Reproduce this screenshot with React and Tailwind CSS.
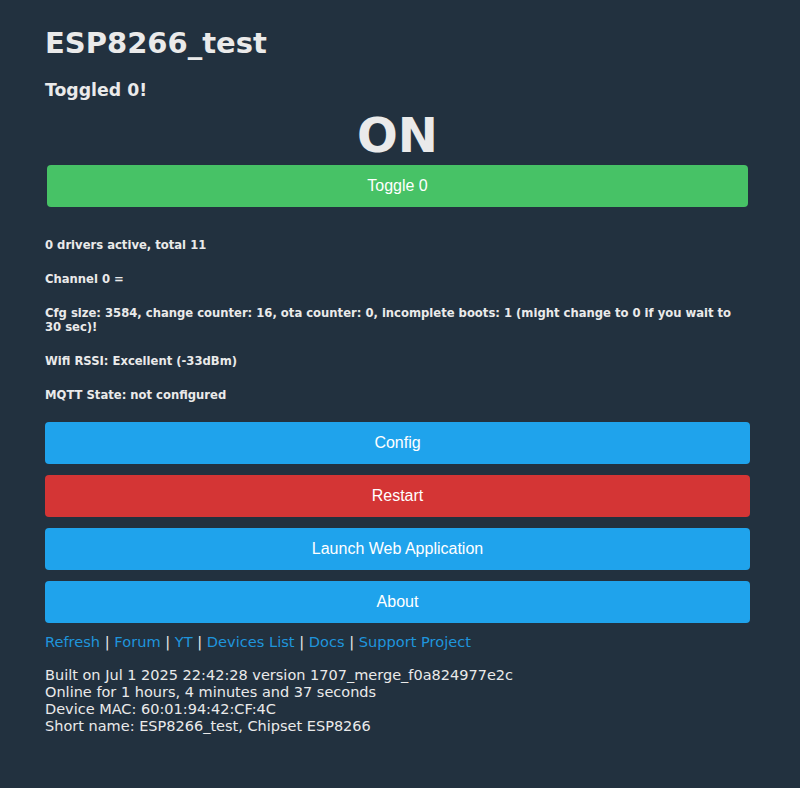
import React from "react";

const verdana = { fontFamily: '"DejaVu Sans", Verdana, sans-serif' };

const info = [
  "0 drivers active, total 11",
  "Channel 0 =",
  "Cfg size: 3584, change counter: 16, ota counter: 0, incomplete boots: 1 (might change to 0 if you wait to 30 sec)!",
  "Wifi RSSI: Excellent (-33dBm)",
  "MQTT State: not configured",
];

const buttons = [
  { label: "Config", cls: "bg-[#1fa3ec]" },
  { label: "Restart", cls: "bg-[#d43535]" },
  { label: "Launch Web Application", cls: "bg-[#1fa3ec]" },
  { label: "About", cls: "bg-[#1fa3ec]" },
];

const links = ["Refresh", "Forum", "YT", "Devices List", "Docs", "Support Project"];

export default function App() {
  return (
    <div className="min-h-[788px] w-full bg-[#22313f] text-[#eaeaea] font-['DejaVu_Sans',Verdana,sans-serif]">
      <div className="pl-[45px] pr-[50px] pt-[27px]">
        <h1 className="text-[29px] leading-[32px] font-bold">ESP8266_test</h1>
        <h3 className="mt-[21px] text-[17.3px] leading-[20px] font-bold">Toggled 0!</h3>
        <div className="mt-[7px] text-center text-[48px] leading-[56px] font-bold">ON</div>
        <div className="mt-[2px] px-[2px]">
          <button className="w-full h-[42px] rounded bg-[#47c266] text-white text-[16px] font-['Liberation_Sans',Arial,sans-serif]">
            Toggle 0
          </button>
        </div>

        <div className="mt-[31px] flex flex-col gap-[20px] text-[11.6px] leading-[14px] font-bold">
          {info.map((t) => (
            <p key={t}>{t}</p>
          ))}
        </div>

        <div className="mt-[20px] flex flex-col gap-[11px]">
          {buttons.map((b) => (
            <button
              key={b.label}
              className={`w-full h-[42px] rounded text-white text-[16px] font-['Liberation_Sans',Arial,sans-serif] ${b.cls}`}
            >
              {b.label}
            </button>
          ))}
        </div>

        <div className="mt-[10px] text-[14.6px] leading-[18px]" style={verdana}>
          {links.map((l, i) => (
            <span key={l}>
              {i > 0 && <span className="text-[#eaeaea]"> | </span>}
              <a className="text-[#1f95dc]">{l}</a>
            </span>
          ))}
        </div>

        <div className="mt-[16px] text-[14.5px] leading-[17px]">
          <div>Built on Jul 1 2025 22:42:28 version 1707_merge_f0a824977e2c</div>
          <div>Online for 1 hours, 4 minutes and 37 seconds</div>
          <div>Device MAC: 60:01:94:42:CF:4C</div>
          <div>Short name: ESP8266_test, Chipset ESP8266</div>
        </div>
      </div>
    </div>
  );
}
